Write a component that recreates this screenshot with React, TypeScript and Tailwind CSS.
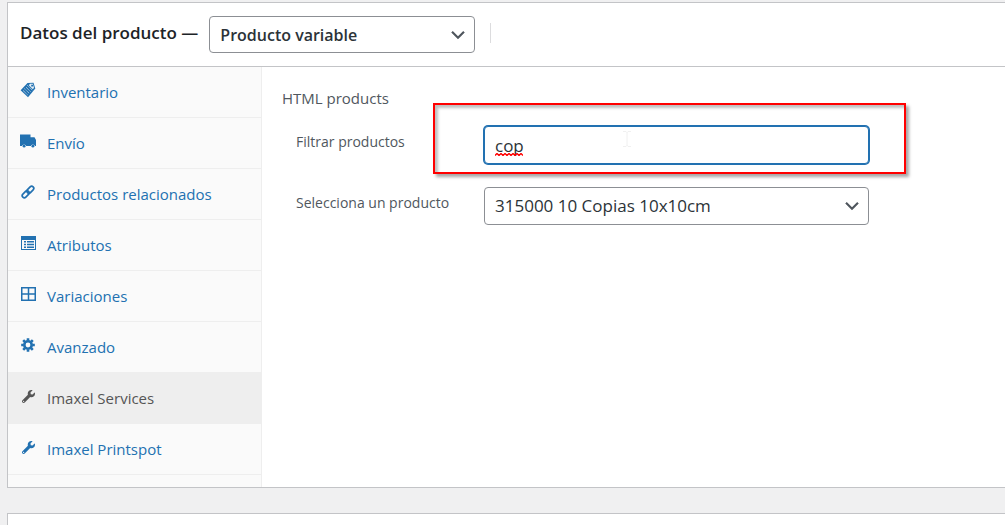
import React from 'react';
import { FaWrench } from 'react-icons/fa';

const TagIcon = () => (
  <svg viewBox="0 0 16 16" className="w-4 h-4" aria-hidden="true">
    <path d="M7.5 1 13.5.8 15.3 6.5 8 15.2.6 8.2z" fill="currentColor" />
    <path
      d="M7.5 3.5 12.5 8.3M6 5.2 11 10M4.5 6.8 9.5 11.6M3 8.4 8 13.2"
      stroke="#fafafa"
      strokeWidth=".9"
      strokeDasharray=".9 .8"
      fill="none"
    />
    <path d="M10 1.8h2.8L14 5.8l-1.2 1.4-4-4z" fill="#e3edf5" />
    <path d="M11.2 2.8h1.8v1.8h-1.8z" fill="currentColor" />
  </svg>
);

const TruckIcon = () => (
  <svg viewBox="0 0 16 14" className="w-4 h-[14px]" fill="currentColor" aria-hidden="true">
    <path d="M0 .5h10.5v2.7h4L16 6v6h-1a2.2 2.2 0 0 0-4.2 0H6.2A2.2 2.2 0 0 0 2 12H0z" />
    <circle cx="4.1" cy="12.2" r="1.4" />
    <circle cx="12.9" cy="12.2" r="1.4" />
  </svg>
);

const LinkIcon = () => (
  <svg viewBox="0 0 14 14" className="w-[14px] h-[14px]" fill="none" stroke="currentColor" strokeWidth="1.7" aria-hidden="true">
    <rect x="-4" y="-2.1" width="8" height="4.2" rx="2.1" transform="translate(9.3 4.7) rotate(-45)" />
    <rect x="-4" y="-2.1" width="8" height="4.2" rx="2.1" transform="translate(4.7 9.3) rotate(-45)" />
  </svg>
);

const ListIcon = () => (
  <svg viewBox="0 0 15 14" className="w-[15px] h-[14px]" aria-hidden="true">
    <path d="M0 0h15v14H0z" fill="currentColor" />
    <path d="M1 4h13v9H1z" fill="#fafafa" />
    <path d="M3 5h2v1.5H3zM3 7.7h2v1.5H3zM3 10.4h2v1.5H3zM6 5h7v1.5H6zM6 7.7h7v1.5H6zM6 10.4h7v1.5H6z" fill="currentColor" />
  </svg>
);

const GridIcon = () => (
  <svg viewBox="0 0 15 14" className="w-[15px] h-[14px]" fill="none" stroke="currentColor" aria-hidden="true">
    <path d="M.75.75h13.5v12.5H.75zM7.5 1v12M1 7h13" strokeWidth="1.5" />
  </svg>
);

const GearIcon = () => (
  <svg viewBox="0 0 14 14" className="w-[14px] h-[14px]" fill="none" stroke="currentColor" aria-hidden="true">
    <circle cx="7" cy="7" r="3.7" strokeWidth="2.6" />
    <path
      d="M7 .2v2.4M7 11.4v2.4M.2 7h2.4M11.4 7h2.4M2.2 2.2l1.7 1.7M10.1 10.1l1.7 1.7M2.2 11.8l1.7-1.7M10.1 3.9l1.7-1.7"
      strokeWidth="2.6"
    />
  </svg>
);

const Chevron = () => (
  <svg
    viewBox="0 0 14 9"
    className="pointer-events-none absolute right-[10px] top-1/2 h-[9px] w-[14px] -translate-y-1/2"
    fill="none"
    stroke="#50575e"
    strokeWidth="2.2"
    aria-hidden="true"
  >
    <path d="M1 1.2 7 7.2 13 1.2" />
  </svg>
);

const tabs = [
  { id: 'inventory', label: 'Inventario', icon: <TagIcon /> },
  { id: 'shipping', label: 'Envío', icon: <TruckIcon /> },
  { id: 'linked', label: 'Productos relacionados', icon: <LinkIcon /> },
  { id: 'attributes', label: 'Atributos', icon: <ListIcon /> },
  { id: 'variations', label: 'Variaciones', icon: <GridIcon /> },
  { id: 'advanced', label: 'Avanzado', icon: <GearIcon /> },
  { id: 'services', label: 'Imaxel Services', icon: <FaWrench size={13} />, active: true },
  { id: 'printspot', label: 'Imaxel Printspot', icon: <FaWrench size={13} /> },
];

const App: React.FC = () => {
  return (
    <div className="min-h-screen bg-[#f0f0f1] pl-[7px] pt-[2px] font-['Open_Sans','Noto_Sans',sans-serif] text-[#50575e]">
      <section className="border border-r-0 border-[#c3c4c7] bg-white">
        <header className="flex h-16 items-center border-b border-[#c3c4c7] px-3">
          <label htmlFor="product-type" className="mr-[11px] pb-1 text-[17px] font-semibold text-[#1d2327]">
            Datos del producto —
          </label>
          <div className="relative h-[37px] w-[266px]">
            <select
              id="product-type"
              className="h-full w-full appearance-none rounded-[4px] border border-[#8c8f94] bg-white pl-[10px] pr-8 text-[16px] font-semibold text-[#2c3338]"
            >
              <option>Producto variable</option>
            </select>
            <Chevron />
          </div>
          <div className="mb-1 ml-[15px] h-5 w-px bg-[#dcdcde]"></div>
        </header>

        <div className="flex">
          <nav className="w-[254px] shrink-0 border-r border-[#eeeeee] bg-[#fafafa] pb-3">
            <ul>
              {tabs.map(tab => (
                <li key={tab.id} className="border-b border-[#eeeeee]">
                  <a
                    href={`#${tab.id}`}
                    className={`flex h-[50px] items-center pl-3 text-[15px] ${
                      tab.active ? 'bg-[#eeeeee] text-[#555555]' : 'text-[#2271b1]'
                    }`}
                  >
                    <span className="mr-[11px] flex w-4 justify-center pb-1">{tab.icon}</span>
                    {tab.label}
                  </a>
                </li>
              ))}
            </ul>
          </nav>

          <div className="min-w-0 flex-1 px-5 pt-[19px]">
            <h2 className="text-[15px] leading-6">HTML products</h2>

            <div className="mt-4 flex pl-[14px]">
              <label htmlFor="filter" className="w-[188px] shrink-0 pt-1 text-[14px] leading-6">
                Filtrar productos
              </label>
              <div className="relative h-[38px] w-full max-w-[385px]">
                <input
                  id="filter"
                  type="text"
                  defaultValue="cop"
                  spellCheck={false}
                  className="h-full w-full rounded-[4px] border border-[#2271b1] bg-white pl-[10px] text-[17px] text-[#2c3338] shadow-[0_0_0_1px_#2271b1] outline-none"
                />
                <svg
                  viewBox="0 0 28 3"
                  className="absolute bottom-[8px] left-[11px] h-[3px] w-7"
                  fill="none"
                  stroke="#ff0000"
                  strokeWidth="1.4"
                  aria-hidden="true"
                >
                  <path d="M0 2.5 2 .5 4 2.5 6 .5 8 2.5 10 .5 12 2.5 14 .5 16 2.5 18 .5 20 2.5 22 .5 24 2.5 26 .5 28 2.5" />
                </svg>
                {/* Text cursor */}
                <svg viewBox="0 0 8 16" className="absolute left-[139px] top-[5px] h-4 w-2" fill="none" stroke="#f0f0f0" aria-hidden="true">
                  <path d="M0 .5h3l1 1 1-1h3M4 1v14M0 15.5h3l1-1 1 1h3" />
                </svg>
                {/* Highlight around the filter */}
                <div className="pointer-events-none absolute -left-[51px] -right-[37px] -top-[23px] h-[71px] border-2 border-[#ff0000] shadow-[3px_3px_3px_rgba(0,0,0,0.35),inset_3px_3px_3px_rgba(0,0,0,0.25)]"></div>
              </div>
            </div>

            <div className="mt-[23px] flex pl-[14px]">
              <label htmlFor="product" className="w-[188px] shrink-0 pt-1 text-[14px] leading-6">
                Selecciona un producto
              </label>
              <div className="relative h-[38px] w-full max-w-[385px]">
                <select
                  id="product"
                  className="h-full w-full appearance-none rounded-[4px] border border-[#8c8f94] bg-white pl-[10px] pr-8 text-[17px] text-[#2c3338]"
                >
                  <option>315000 10 Copias 10x10cm</option>
                </select>
                <Chevron />
              </div>
            </div>
          </div>
        </div>
      </section>

      <section className="mt-[25px] h-3 border border-b-0 border-r-0 border-[#c3c4c7] bg-white"></section>
    </div>
  );
};

export default App;
